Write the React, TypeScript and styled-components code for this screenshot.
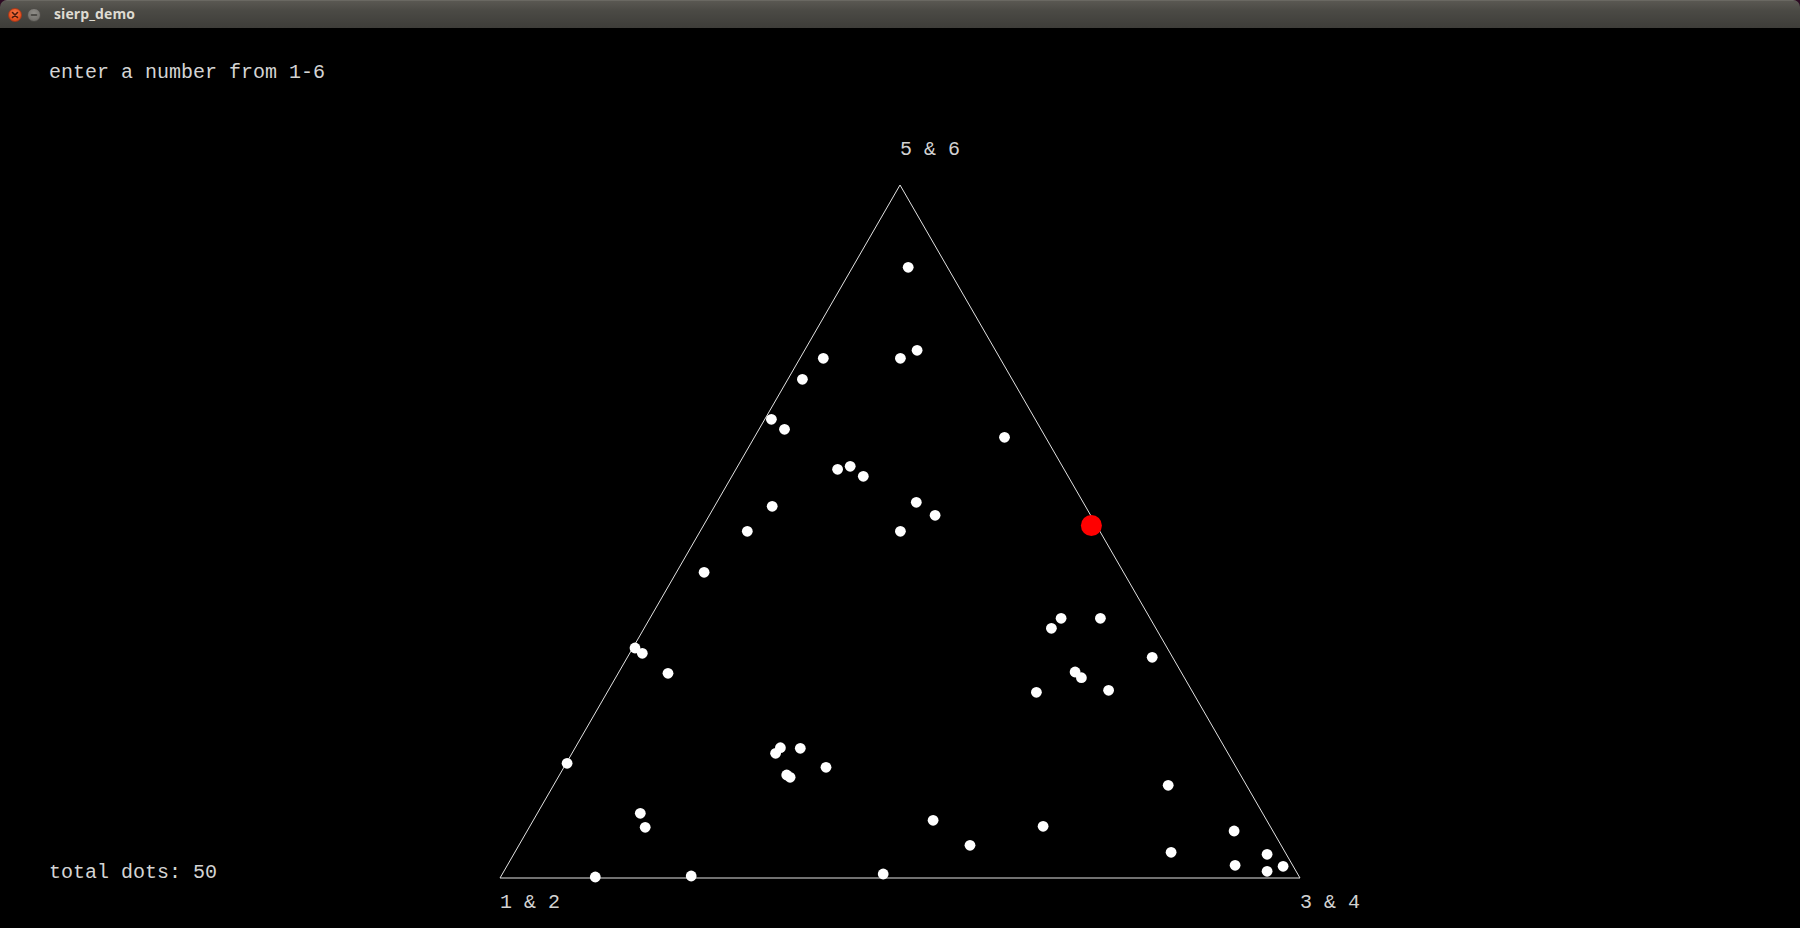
import React from "react";
import styled, { createGlobalStyle } from "styled-components";

const GlobalStyle = createGlobalStyle`
  html, body {
    margin: 0;
    padding: 0;
    background: #2c0a22;
    overflow: hidden;
  }
  #root {
    width: 1800px;
    height: 928px;
  }
`;

const Window = styled.div`
  width: 1800px;
  height: 928px;
  display: flex;
  flex-direction: column;
  border-radius: 7px 7px 0 0;
  overflow: hidden;
`;

const TitleBar = styled.div`
  height: 28px;
  flex: 0 0 28px;
  display: flex;
  align-items: center;
  padding-left: 8px;
  box-sizing: border-box;
  background: linear-gradient(#5a5852 0%, #4b4a45 35%, #3e3d39 100%);
  border-top: 1px solid #6a6862;
`;

const WinButton = styled.div<{ $kind: "close" | "min" }>`
  width: 14px;
  height: 14px;
  border-radius: 50%;
  margin-right: 5px;
  display: flex;
  align-items: center;
  justify-content: center;
  box-sizing: border-box;
  background: ${(p) =>
    p.$kind === "close"
      ? "radial-gradient(circle at 50% 35%, #f7784a 0%, #e8531f 60%, #c9401a 100%)"
      : "radial-gradient(circle at 50% 35%, #8f8d88 0%, #797772 60%, #65635e 100%)"};
  border: 1px solid ${(p) => (p.$kind === "close" ? "#a8391a" : "#4e4c48")};
`;

const Title = styled.span`
  margin-left: 8px;
  font-family: "Open Sans", "DejaVu Sans", sans-serif;
  font-weight: 700;
  font-size: 14px;
  color: #dfdbd2;
  letter-spacing: 0.1px;
  line-height: 28px;
  padding-bottom: 1px;
`;

const Canvas = styled.div`
  flex: 1;
  background: #000;
  display: grid;
  grid-template: 1fr / 1fr;
`;

const Drawing = styled.svg`
  grid-area: 1 / 1;
  display: block;
  width: 1800px;
  height: 900px;
`;

const Hud = styled.div`
  grid-area: 1 / 1;
  display: flex;
  flex-direction: column;
  justify-content: space-between;
  padding: 33px 0 43px 49px;
  font-family: "Courier New", "Liberation Mono", monospace;
  font-size: 20px;
  line-height: 24px;
  color: #d4d4d4;
  white-space: pre;
`;

const HudLine = styled.div``;

const LabelText = styled.text`
  font-family: "Liberation Mono", "DejaVu Sans Mono", monospace;
  font-size: 20px;
  fill: #d2d2d2;
`;

const TOP = 28;

const dots: [number, number][] = [
  [908.2, 267.3], [823.3, 358.3], [900.4, 358.3], [917.1, 350.3],
  [802.4, 379.3], [771.4, 419.3], [784.5, 429.3], [1004.5, 437.3],
  [837.6, 469.3], [850.2, 466.3], [863.3, 476.3], [772.2, 506.3],
  [916.3, 502.3], [935.1, 515.3], [747.3, 531.3], [900.4, 531.3],
  [704.1, 572.3],
  [635, 648], [642.3, 653.3], [668, 673.3], [567.1, 763.3],
  [1061.1, 618.3], [1051.4, 628.3], [1100.4, 618.3], [1152.2, 657.3],
  [1075.1, 672], [1081.4, 677.7], [1036.4, 692.3], [1108.6, 690.3],
  [780.4, 747.7], [775.6, 753.3], [800.3, 748.3], [826, 767.3],
  [786.7, 775], [790.1, 777.3], [1168.2, 785.3], [640.3, 813.3],
  [645.2, 827.3], [933.1, 820.3], [1043.1, 826.3], [970, 845.3],
  [1234.1, 831], [1171.1, 852.3], [1267.1, 854.3], [1235.1, 865.3],
  [1283.1, 866.3], [1267.1, 871.3], [595.3, 877], [691.2, 876],
  [883.2, 874],
];

const current: [number, number] = [1091.4, 525.5];

const vertices = {
  top: [900, 185],
  left: [500, 878],
  right: [1300, 878],
};

export default function App() {
  const pts = [vertices.left, vertices.right, vertices.top]
    .map(([x, y]) => `${x},${y - TOP}`)
    .join(" ");
  return (
    <>
      <GlobalStyle />
      <Window>
        <TitleBar>
          <WinButton $kind="close">
            <svg width="8" height="8" viewBox="0 0 8 8">
              <path d="M1.5 1.5 L6.5 6.5 M6.5 1.5 L1.5 6.5" stroke="#4a1a0c" strokeWidth="1.6" strokeLinecap="round" />
            </svg>
          </WinButton>
          <WinButton $kind="min">
            <svg width="8" height="8" viewBox="0 0 8 8">
              <path d="M1.5 4 L6.5 4" stroke="#3c3b37" strokeWidth="1.6" strokeLinecap="round" />
            </svg>
          </WinButton>
          <Title>sierp_demo</Title>
        </TitleBar>
        <Canvas>
          <Drawing viewBox="0 0 1800 900">
            <polygon points={pts} fill="none" stroke="#e2e2e2" strokeWidth="1" />
            {dots.map(([x, y], i) => (
              <circle key={i} cx={x} cy={y - TOP} r={5.4} fill="#ffffff" />
            ))}
            <circle cx={current[0]} cy={current[1] - TOP} r={10.5} fill="#ff0000" />
            <LabelText x={900} y={155 - TOP}>5 &amp; 6</LabelText>
            <LabelText x={500} y={908 - TOP}>1 &amp; 2</LabelText>
            <LabelText x={1300} y={908 - TOP}>3 &amp; 4</LabelText>
          </Drawing>
          <Hud>
            <HudLine>enter a number from 1-6</HudLine>
            <HudLine>total dots: 50</HudLine>
          </Hud>
        </Canvas>
      </Window>
    </>
  );
}
